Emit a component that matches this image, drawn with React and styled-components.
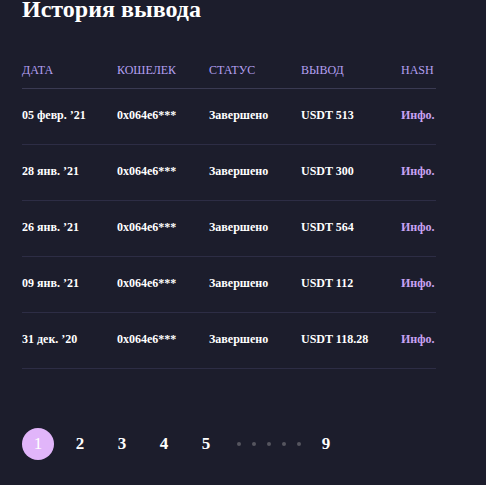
import React from 'react'
import styled, { createGlobalStyle } from 'styled-components'

const GlobalStyle = createGlobalStyle`
  html, body {
    margin: 0;
    padding: 0;
    background: #1c1d2c;
  }
  body {
    font-family: "Liberation Serif", "Times New Roman", serif;
    color: #fff;
  }
`

const rows = [
  { date: '05 февр. ’21', wallet: '0x064e6***', status: 'Завершено', amount: 'USDT 513' },
  { date: '28 янв. ’21', wallet: '0x064e6***', status: 'Завершено', amount: 'USDT 300' },
  { date: '26 янв. ’21', wallet: '0x064e6***', status: 'Завершено', amount: 'USDT 564' },
  { date: '09 янв. ’21', wallet: '0x064e6***', status: 'Завершено', amount: 'USDT 112' },
  { date: '31 дек. ’20', wallet: '0x064e6***', status: 'Завершено', amount: 'USDT 118.28' },
]

const Page = styled.div`
  width: 414px;
  padding: 0 22px;
  height: 485px;
`

const Title = styled.h2`
  margin: 0;
  font-size: 24px;
  line-height: 18px;
  font-weight: 700;
  color: #fff;
  white-space: nowrap;
`

const Table = styled.div`
  margin-top: 35px;
  display: flex;
  flex-direction: column;
`

const Row = styled.div`
  box-sizing: border-box;
  display: grid;
  grid-template-columns: 95px 92px 92px 100px 1fr;
  align-items: center;
  height: ${p => (p.$head ? '36px' : '56px')};
  padding-bottom: ${p => (p.$head ? '0' : '2px')};
  border-bottom: 1px solid ${p => (p.$head ? '#3a3a52' : '#2d2d45')};
  font-size: 12px;
  font-weight: ${p => (p.$head ? 400 : 700)};
  color: ${p => (p.$head ? '#b5a0f2' : '#fff')};
  text-transform: ${p => (p.$head ? 'uppercase' : 'none')};
`

const Cell = styled.span`
  white-space: nowrap;
`

const InfoLink = styled.a`
  color: #c9a3f3;
  font-weight: 700;
  text-decoration: none;
  cursor: pointer;
`

const Pager = styled.div`
  display: flex;
  align-items: center;
  margin-top: 59px;
`

const PageBtn = styled.button`
  width: 32px;
  height: 32px;
  border-radius: 50%;
  border: none;
  padding: 0;
  margin-right: 10px;
  background: ${p => (p.$active ? '#e1b5fa' : 'transparent')};
  color: #fff;
  font-family: inherit;
  font-size: 17px;
  font-weight: ${p => (p.$active ? 400 : 700)};
  cursor: pointer;
`

const Dots = styled.div`
  display: flex;
  gap: 11px;
  margin: 0 9px 0 5px;
`

const Dot = styled.span`
  width: 4px;
  height: 4px;
  border-radius: 50%;
  background: #55555f;
`

export default function App() {
  return (
    <Page>
      <GlobalStyle />
      <Title>История вывода</Title>
      <Table>
        <Row $head>
          <Cell>Дата</Cell>
          <Cell>Кошелек</Cell>
          <Cell>Статус</Cell>
          <Cell>Вывод</Cell>
          <Cell>Hash</Cell>
        </Row>
        {rows.map((r, i) => (
          <Row key={i}>
            <Cell>{r.date}</Cell>
            <Cell>{r.wallet}</Cell>
            <Cell>{r.status}</Cell>
            <Cell>{r.amount}</Cell>
            <Cell><InfoLink>Инфо.</InfoLink></Cell>
          </Row>
        ))}
      </Table>
      <Pager>
        {[1, 2, 3, 4, 5].map(n => (
          <PageBtn key={n} $active={n === 1}>{n}</PageBtn>
        ))}
        <Dots>
          {[0, 1, 2, 3, 4].map(d => <Dot key={d} />)}
        </Dots>
        <PageBtn>9</PageBtn>
      </Pager>
    </Page>
  )
}
